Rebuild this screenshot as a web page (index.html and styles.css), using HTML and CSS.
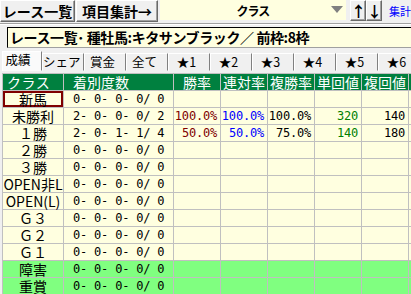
FILE: index.html
```html
<!DOCTYPE html>
<html lang="ja">
<head>
    <meta charset="UTF-8">
    <title>レース一覧</title>
    <link rel="stylesheet" href="styles.css">
</head>
<body>
    <div class="toolbar">
        <button class="btn btn-list">レース一覧</button>
        <button class="btn btn-sum">項目集計→</button>
        <div class="combo">
            <span class="combo-text">クラス</span>
            <span class="combo-arrow"></span>
        </div>
        <button class="btn btn-arrow btn-up">↑</button>
        <button class="btn btn-arrow">↓</button>
        <a href="#" class="link">集計</a>
    </div>
    <div class="divider"></div>

    <div class="title">レース一覧･ 種牡馬:キタサンブラック／ 前枠:8枠</div>

    <div class="tabs">
        <div class="tab active">成績</div>
        <div class="tab">シェア</div>
        <div class="tab">賞金</div>
        <div class="tab">全て</div>
        <div class="tab">★1</div>
        <div class="tab">★2</div>
        <div class="tab">★3</div>
        <div class="tab">★4</div>
        <div class="tab">★5</div>
        <div class="tab">★6</div>
    </div>

    <table class="grid">
        <thead>
            <tr>
                <th class="c-class h-class">クラス</th>
                <th class="c-count h-count">着別度数</th>
                <th class="c-rate">勝率</th>
                <th class="c-rate">連対率</th>
                <th class="c-rate">複勝率</th>
                <th class="c-rate">単回値</th>
                <th class="c-rate">複回値</th>
                <th></th>
            </tr>
        </thead>
        <tbody>
            <tr>
                <td class="cls selected">新馬</td><td class="cnt"> 0- 0- 0- 0/ 0</td>
                <td class="num"></td><td class="num"></td><td class="num"></td><td class="num"></td><td class="num"></td><td></td>
            </tr>
            <tr>
                <td class="cls">未勝利</td><td class="cnt"> 2- 0- 0- 0/ 2</td>
                <td class="num red">100.0%</td><td class="num blue">100.0%</td><td class="num">100.0%</td><td class="num green">320</td><td class="num">140</td><td></td>
            </tr>
            <tr>
                <td class="cls">１勝</td><td class="cnt"> 2- 0- 1- 1/ 4</td>
                <td class="num red">50.0%</td><td class="num blue">50.0%</td><td class="num">75.0%</td><td class="num green">140</td><td class="num">180</td><td></td>
            </tr>
            <tr>
                <td class="cls">２勝</td><td class="cnt"> 0- 0- 0- 0/ 0</td>
                <td class="num"></td><td class="num"></td><td class="num"></td><td class="num"></td><td class="num"></td><td></td>
            </tr>
            <tr>
                <td class="cls">３勝</td><td class="cnt"> 0- 0- 0- 0/ 0</td>
                <td class="num"></td><td class="num"></td><td class="num"></td><td class="num"></td><td class="num"></td><td></td>
            </tr>
            <tr>
                <td class="cls">OPEN非L</td><td class="cnt"> 0- 0- 0- 0/ 0</td>
                <td class="num"></td><td class="num"></td><td class="num"></td><td class="num"></td><td class="num"></td><td></td>
            </tr>
            <tr>
                <td class="cls">OPEN(L)</td><td class="cnt"> 0- 0- 0- 0/ 0</td>
                <td class="num"></td><td class="num"></td><td class="num"></td><td class="num"></td><td class="num"></td><td></td>
            </tr>
            <tr>
                <td class="cls">Ｇ３</td><td class="cnt"> 0- 0- 0- 0/ 0</td>
                <td class="num"></td><td class="num"></td><td class="num"></td><td class="num"></td><td class="num"></td><td></td>
            </tr>
            <tr>
                <td class="cls">Ｇ２</td><td class="cnt"> 0- 0- 0- 0/ 0</td>
                <td class="num"></td><td class="num"></td><td class="num"></td><td class="num"></td><td class="num"></td><td></td>
            </tr>
            <tr>
                <td class="cls">Ｇ１</td><td class="cnt"> 0- 0- 0- 0/ 0</td>
                <td class="num"></td><td class="num"></td><td class="num"></td><td class="num"></td><td class="num"></td><td></td>
            </tr>
            <tr class="jump">
                <td class="cls">障害</td><td class="cnt"> 0- 0- 0- 0/ 0</td>
                <td class="num"></td><td class="num"></td><td class="num"></td><td class="num"></td><td class="num"></td><td></td>
            </tr>
            <tr class="jump">
                <td class="cls">重賞</td><td class="cnt"> 0- 0- 0- 0/ 0</td>
                <td class="num"></td><td class="num"></td><td class="num"></td><td class="num"></td><td class="num"></td><td></td>
            </tr>
        </tbody>
    </table>
</body>
</html>
```

FILE: styles.css
```css
/* Race list window */
body {
    margin: 0;
    width: 411px;
    height: 294px;
    overflow: hidden;
    background-color: #f0f0f0;
    font-family: "Noto Sans CJK JP", sans-serif;
    color: #000;
}

/* toolbar */
.toolbar {
    display: flex;
    align-items: flex-start;
    height: 22px;
}
.btn {
    flex: none;
    height: 22px;
    padding: 0;
    background-color: #f0f0f0;
    border: 1px solid;
    border-color: #fff #696969 #696969 #fff;
    box-shadow: inset -1px -1px #a0a0a0;
    font-family: "Noto Sans CJK JP", sans-serif;
    font-size: 14px;
    font-weight: bold;
    line-height: 18px;
    color: #000;
    white-space: nowrap;
}
.btn-list {
    width: 75px;
}
.btn-sum {
    width: 82px;
    margin-left: 1px;
}
.combo {
    flex: none;
    position: relative;
    width: 186px;
    height: 20px;
    margin-left: 2px;
    background-color: #ffffe0;
    display: flex;
    align-items: center;
    justify-content: center;
}
.combo-text {
    font-size: 12px;
    font-weight: bold;
    letter-spacing: -1px;
}
.combo-arrow {
    position: absolute;
    right: 3px;
    top: 6px;
    border-left: 6px solid transparent;
    border-right: 6px solid transparent;
    border-top: 7px solid #808080;
}
.btn-arrow {
    width: 16px;
    height: 21px;
    font-size: 15px;
    line-height: 17px;
    text-align: center;
}
.btn-up {
    margin-left: 4px;
}
.link {
    flex: none;
    margin-left: 7px;
    font-size: 11px;
    line-height: 22px;
    color: #0000ff;
    text-decoration: none;
}
.divider {
    margin-top: 1px;
    border-top: 1px solid #a0a0a0;
    border-bottom: 1px solid #fff;
}

/* title box */
.title {
    margin: 2px 0 0 7px;
    height: 19px;
    padding-left: 2px;
    background-color: #ffffe0;
    border-top: 1px solid #000;
    border-left: 1px solid #000;
    border-bottom: 1px solid #a0a0a0;
    font-size: 14px;
    font-weight: bold;
    letter-spacing: -0.4px;
    line-height: 19px;
    white-space: nowrap;
}

/* tabs */
.tabs {
    display: flex;
    align-items: flex-end;
    height: 21px;
    margin-top: 2px;
    padding-left: 2px;
}
.tab {
    flex: none;
    box-sizing: border-box;
    width: 42px;
    height: 18px;
    padding-right: 5px;
    background-color: #f0f0f0;
    border: 1px solid;
    border-color: #fff #808080 transparent #fff;
    font-size: 12.5px;
    line-height: 16px;
    text-align: center;
    white-space: nowrap;
}
.tab.active {
    width: 40px;
    height: 20px;
    padding-right: 8px;
    background-color: #fafafa;
}

/* result grid */
.grid {
    margin: 2px 0 0 2px;
    table-layout: fixed;
    width: 410px;
    border-collapse: separate;
    border-spacing: 1px;
    background-color: #c0c0c0;
}
.grid th,
.grid td {
    box-sizing: border-box;
    height: 16px;
    padding: 0;
    font-size: 12px;
    line-height: 16px;
    white-space: nowrap;
}
.grid th {
    background-color: #00803f;
    color: #fff;
    font-size: 14px;
    font-weight: normal;
    text-align: center;
}
.grid td {
    background-color: #ffffe0;
}
.c-class {
    width: 60px;
}
.c-count {
    width: 109px;
}
.c-rate {
    width: 46px;
}
.grid .h-class {
    padding-left: 4px;
    text-align: left;
    letter-spacing: 0.5px;
}
.grid .h-count {
    padding-left: 9px;
    text-align: left;
}
.grid .cls {
    font-size: 14px;
    text-align: center;
}
.selected {
    box-shadow: inset 0 0 0 2px #800000;
}
.grid .cnt,
.grid .num {
    font-family: "DejaVu Sans Mono", monospace;
    letter-spacing: -0.2px;
}
.grid .cnt {
    padding-left: 2px;
    white-space: pre;
}
.grid .num {
    padding-right: 3px;
    text-align: right;
}
.red {
    color: #800000;
}
.blue {
    color: #0000ff;
}
.green {
    color: #008000;
}
.grid .jump td {
    background-color: #80ff80;
}
```
